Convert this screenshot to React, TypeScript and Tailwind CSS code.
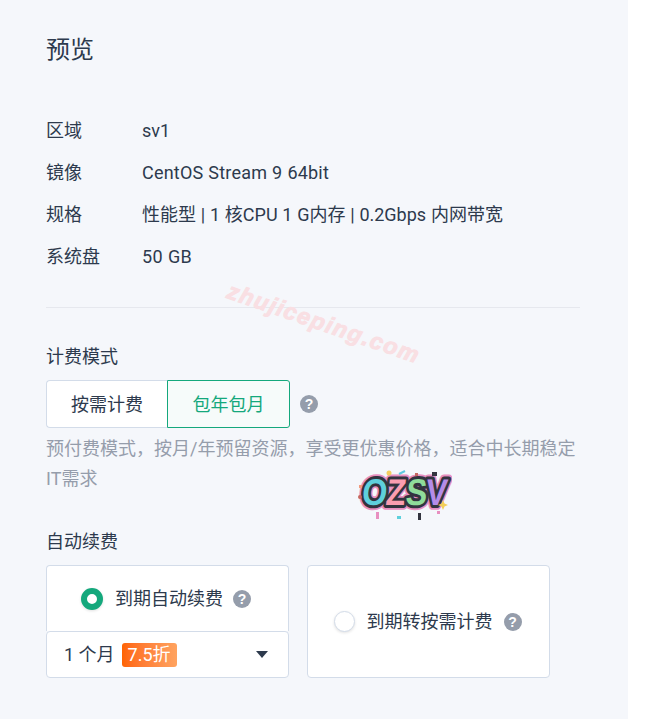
function HelpIcon({ className = "" }: { className?: string }) {
  return (
    <span className={"inline-flex h-[18px] w-[18px] shrink-0 items-center justify-center rounded-full bg-[#959dab] font-['Liberation_Sans',sans-serif] text-[14px] leading-none font-bold text-white " + className}>
      ?
    </span>
  );
}

function Logo() {
  const letters = [
    { ch: "O", x: 0, fill: "#5ed0dc" },
    { ch: "Z", x: 23, fill: "#fb9db0" },
    { ch: "S", x: 42, fill: "#8fdc9a" },
    { ch: "V", x: 61, fill: "#b58ce8" },
  ];
  return (
    <svg width="100" height="54" viewBox="0 0 100 54" className="absolute left-[352px] top-[467px]">
      <g transform="translate(9 38) skewX(-6) scale(1.04 1.2)" fontFamily="'Liberation Sans', sans-serif" fontWeight="700" fontSize="31" strokeLinejoin="round">
        {letters.map((l) => (
          <text key={"p" + l.ch} x={l.x} y="0" stroke="#e88fc0" strokeWidth="8" fill="#e88fc0">{l.ch}</text>
        ))}
        {letters.map((l) => (
          <text key={"d" + l.ch} x={l.x} y="0" stroke="#33343f" strokeWidth="5" fill={l.fill} paintOrder="stroke">{l.ch}</text>
        ))}
      </g>
      <circle cx="37" cy="6" r="2.500" fill="#f5cd5f" />
      <path d="M47 7l6-3" stroke="#5ec8e0" strokeWidth="2" />
      <rect x="63" y="6" width="3" height="3" fill="#c5675f" />
      <rect x="80" y="5" width="5" height="4" fill="#33343f" />
      <rect x="7" y="18" width="3" height="3" fill="#f29a7d" />
      <circle cx="8" cy="30" r="2" fill="#c5675f" />
      <path d="M91 33l1.500 3.500 3.500 1.500-3.500 1.500-1.500 3.500-1.500-3.500-3.500-1.500 3.500-1.500z" fill="#f3cf5a" />
      <rect x="24" y="45" width="3" height="7" fill="#e88fc0" />
      <rect x="66" y="46" width="3" height="7" fill="#33343f" />
      <rect x="45" y="49" width="4" height="3" fill="#5ed0dc" />
      <rect x="85" y="44" width="3" height="3" fill="#e88fc0" />
    </svg>
  );
}

export default function App() {
  const rows = [
    { label: "区域", value: "sv1", cls: "" },
    { label: "镜像", value: "CentOS Stream 9 64bit", cls: "tracking-[0.2px]" },
    { label: "规格", value: "性能型 | 1 核CPU 1 G内存 | 0.2Gbps 内网带宽", cls: "" },
    { label: "系统盘", value: "50 GB", cls: "tracking-[0.3px]" },
  ];

  return (
    <div className="relative h-[719px] w-[655px] overflow-hidden bg-white font-['Roboto','Noto_Sans_CJK_SC',sans-serif] text-[#2d3a4d]">
      <div className="h-[719px] w-[628px] bg-[#f5f7fb] pl-[46px] pt-[32px] pr-[48px]">
        <h2 className="text-[24px] leading-[36px]">预览</h2>

        <div className="mt-[49px] flex flex-col gap-[14px]">
          {rows.map((row) => (
            <div key={row.label} className="flex text-[18px] leading-[28px]">
              <div className="w-[96px]">{row.label}</div>
              <div className={"[word-spacing:0.3px] " + row.cls}>{row.value}</div>
            </div>
          ))}
        </div>

        <div className="mt-[36px] h-px bg-[#e6e8ee]" />

        <div className="mt-[36px] text-[18px] leading-[26px]">计费模式</div>
        <div className="mt-[10px] flex items-center">
          <div className="flex h-[48px] w-[121px] items-center justify-center rounded-l-[4px] border border-r-0 border-[#d3dce9] bg-white text-[18px]">
            按需计费
          </div>
          <div className="flex h-[48px] w-[123px] items-center justify-center rounded-r-[3px] border border-[#14a87c] bg-[#f6fbfa] text-[18px] text-[#14a87c]">
            包年包月
          </div>
          <HelpIcon className="ml-[10px] mb-[1px]" />
        </div>
        <p className="mt-[6px] text-[18px] leading-[30px] text-[#959dab]">
          预付费模式，按月/年预留资源，享受更优惠价格，适合中长期稳定IT需求
        </p>

        <div className="mt-[35px] text-[18px] leading-[26px]">自动续费</div>
        <div className="mt-[10px] flex gap-[18px]">
          <div className="w-[243px]">
            <div className="flex h-[66px] items-center justify-center rounded-t-[4px] border border-b-0 border-[#d3dce9] bg-white pr-[3px]">
              <span className="h-[22px] w-[22px] rounded-full border-[6px] border-[#14a87c] bg-white shadow-[0_1px_3px_rgba(0,0,0,0.12)]" />
              <span className="ml-[12px] text-[18px]">到期自动续费</span>
              <HelpIcon className="ml-[10px]" />
            </div>
            <div className="flex h-[47px] items-center rounded-[4px] border border-[#d3dce9] bg-white pl-[17px] pr-[20px]">
              <span className="text-[18px]">1 个月</span>
              <span className="ml-[7px] flex h-[24px] w-[55px] items-center justify-center rounded-[3px] bg-gradient-to-r from-[#ff6400] to-[#ffa35f] text-[18px] leading-none text-white">
                7.5折
              </span>
              <span className="ml-auto h-0 w-0 border-x-[6px] border-t-[7px] border-x-transparent border-t-[#2d3a4d]" />
            </div>
          </div>
          <div className="flex h-[113px] w-[243px] items-center justify-center rounded-[4px] border border-[#d3dce9] bg-white pr-[2px]">
            <span className="h-[21px] w-[21px] rounded-full border border-[#d3dce9] bg-white shadow-[0_1px_3px_rgba(0,0,0,0.12)]" />
            <span className="ml-[12px] text-[18px]">到期转按需计费</span>
            <HelpIcon className="ml-[11px]" />
          </div>
        </div>
      </div>

      <div className="absolute left-[228px] top-[273px] rotate-[19deg] whitespace-nowrap font-['Liberation_Sans',sans-serif] text-[23px] font-bold italic tracking-[1.5px] text-[#f9dfe3] [-webkit-text-stroke:0.9px_#f9dfe3] [transform-origin:left_center]">
        zhujiceping.com
      </div>
      <Logo />
    </div>
  );
}
